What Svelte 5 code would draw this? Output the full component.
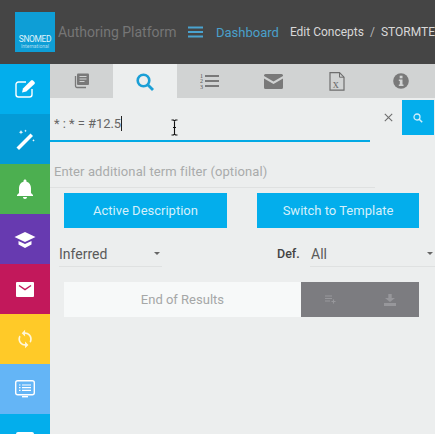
<script>
  const side = [
    { c: 'edit', bg: '#03aeec' },
    { c: 'wand', bg: '#049bd6' },
    { c: 'bell', bg: '#4caf50' },
    { c: 'grad', bg: '#673ab0' },
    { c: 'mail', bg: '#c2185b' },
    { c: 'sync', bg: '#ffca28' },
    { c: 'list', bg: '#64b5f6' },
    { c: 'last', bg: '#03aeec' }
  ];
</script>

<div class="page">
  <header class="top">
    <div class="logo">
      <span class="l1">SNOMED</span>
      <span class="l2">International</span>
    </div>
    <span class="brand">Authoring Platform</span>
    <svg class="burger" width="15" height="12" viewBox="0 0 15 12"><path d="M0 1.500h15M0 6h15M0 10.500h15" stroke="#4aa3d0" stroke-width="1.800"/></svg>
    <span class="dash">Dashboard</span>
    <span class="crumb">Edit Concepts</span>
    <span class="slash">/</span>
    <span class="crumb">STORMTEST</span>
  </header>

  <div class="body">
    <nav class="side">
      {#each side as s}
        <div class="sitem" style="background:{s.bg}">
          <svg width="24" height="24" viewBox="0 0 24 24" fill="none">
            {#if s.c === 'edit'}
              <path d="M13 5H5.500A2.500 2.500 0 0 0 3 7.500v10A2.500 2.500 0 0 0 5.500 20h11a2.500 2.500 0 0 0 2.500-2.500V12" stroke="#fff" stroke-width="1.400"/>
              <path d="M9 15.500l1-4L18 3.500a1.500 1.500 0 0 1 2 0l1.500 1.500a1.500 1.500 0 0 1 0 2L13.300 14.500z" fill="#fff"/>
            {:else if s.c === 'wand'}
              <path d="M3.500 21.500L17.500 7.500l2.500 2.500L6 24z" fill="#fff" transform="translate(0 -1)"/>
              <path d="M8 3l.6 1.600 1.600.6-1.600.6L8 7.400l-.6-1.600-1.600-.6 1.600-.6zM12.500 2.500l.4 1 1 .4-1 .4-.4 1-.4-1-1-.4 1-.4zM20.500 12l.4 1 1 .4-1 .4-.4 1-.4-1-1-.4 1-.4z" fill="#fff"/>
            {:else if s.c === 'bell'}
              <path d="M12 22c1.100 0 2-.9 2-2h-4c0 1.100.89 2 2 2zm6-6v-5c0-3.070-1.640-5.640-4.500-6.320V4c0-.83-.67-1.500-1.500-1.500s-1.500.67-1.500 1.500v.68C7.630 5.360 6 7.920 6 11v5l-2 2v1h16v-1l-2-2z" fill="#fff"/>
            {:else if s.c === 'grad'}
              <path d="M12 5L1.500 10 12 15l10.500-5z" fill="#fff"/>
              <path d="M5.500 14v3.500L12 21l6.500-3.500V14L12 17z" fill="#fff"/>
            {:else if s.c === 'mail'}
              <rect x="3" y="5" width="18" height="15" rx="1" fill="#fff"/>
              <path d="M6 8.500l6 4 6-4" stroke="#c2185b" stroke-width="1.500"/>
            {:else if s.c === 'sync'}
              <g transform="translate(2 2) scale(.84)">
                <path d="M12 4V1L8 5l4 4V6c3.310 0 6 2.690 6 6 0 1.010-.25 1.970-.7 2.800l1.460 1.460C19.540 15.030 20 13.570 20 12c0-4.420-3.580-8-8-8zm0 14c-3.310 0-6-2.690-6-6 0-1.010.25-1.970.7-2.800L5.240 7.740C4.460 8.970 4 10.430 4 12c0 4.420 3.580 8 8 8v3l4-4-4-4v3z" fill="#fff6d8"/>
              </g>
            {:else if s.c === 'list'}
              <rect x="2.700" y="3.700" width="18.600" height="14" rx="2" stroke="#fff" stroke-width="1.400"/>
              <path d="M9 19.700h6" stroke="#fff" stroke-width="1.400"/>
              <path d="M6 8h1.500M9 8h9M6 10.700h1.500M9 10.700h9M6 13.400h1.500M9 13.400h9" stroke="#fff" stroke-width="1.200"/>
            {:else}
              <path d="M3 7a2 2 0 0 1 2-2h14a2 2 0 0 1 2 2v12H3z" fill="#fff"/>
            {/if}
          </svg>
        </div>
      {/each}
    </nav>

    <main class="main">
      <div class="tabs">
        <div class="tab first">
          <svg width="18" height="18" viewBox="0 0 18 18"><path d="M5 1.500h10a1 1 0 0 1 1 1V12a1 1 0 0 1-1 1H5a1 1 0 0 1-1-1V2.500a1 1 0 0 1 1-1z" fill="#797979"/><path d="M6.500 4.500h7M6.500 7h7M6.500 9.500h5" stroke="#d1d3d3" stroke-width="1.200"/><path d="M2.500 4v10a1.500 1.500 0 0 0 1.500 1.500h9" stroke="#797979" stroke-width="1.300" fill="none"/></svg>
        </div>
        <div class="tab active">
          <svg width="20" height="20" viewBox="0 0 20 20" fill="none"><circle cx="8.500" cy="8.500" r="5.800" stroke="#1a9fd6" stroke-width="2.600"/><path d="M13 13l5 5" stroke="#1a9fd6" stroke-width="2.800"/></svg>
        </div>
        <div class="tab">
          <svg width="19" height="18" viewBox="0 0 19 18"><text x="0" y="5.500" class="nums">1</text><text x="0" y="11" class="nums">2</text><text x="0" y="16.500" class="nums">3</text><path d="M5 4h14M5 9h14M5 14h14" stroke="#797979" stroke-width="2"/></svg>
        </div>
        <div class="tab">
          <svg width="19" height="15" viewBox="0 0 19 15"><path d="M1.500 0h16A1.500 1.500 0 0 1 19 1.500v.4L9.500 7.500 0 1.900v-.4A1.500 1.500 0 0 1 1.500 0z" fill="#797979"/><path d="M0 4.400l9.500 5.500L19 4.400v9.100a1.500 1.500 0 0 1-1.500 1.500h-16A1.500 1.500 0 0 1 0 13.500z" fill="#797979"/></svg>
        </div>
        <div class="tab">
          <svg width="16" height="19" viewBox="0 0 16 19" fill="none"><path d="M1 .7h9.500L15 5.200v13H1z" stroke="#6e6e6e" stroke-width="1.200"/><path d="M10.500 .7v4.500H15" stroke="#6e6e6e" stroke-width="1"/><text x="3.700" y="15.500" class="x">x</text></svg>
        </div>
        <div class="tab">
          <svg width="16" height="16" viewBox="0 0 16 16"><circle cx="8" cy="8" r="7.800" fill="#797979"/><rect x="6.700" y="2.700" width="2.800" height="2.600" fill="#d1d3d3"/><path d="M5.800 6.500h3.700v5h1v1.500H5.800v-1.500h1v-3.500h-1z" fill="#d1d3d3"/></svg>
        </div>
      </div>

      <section class="search">
        <div class="query">
          <span class="qtext">* : * = #12.5</span><span class="caret"></span>
        </div>
        <svg class="ibeam" width="9" height="17" viewBox="0 0 9 17" fill="none"><path d="M1.500 1h2l1 1 1-1h2M4.500 2v13M1.500 16h2l1-1 1 1h2M3 8.500h3" stroke="#111" stroke-width="1.100"/></svg>
        <svg class="clear" width="9" height="9" viewBox="0 0 9 9"><path d="M.8.8l7.400 7.400M8.200.8L.8 8.200" stroke="#6e6e6e" stroke-width="1.100"/></svg>
        <div class="sbtn">
          <svg width="10" height="10" viewBox="0 0 10 10" fill="none"><circle cx="4" cy="4" r="3" stroke="#cfeefb" stroke-width="1.300"/><path d="M6.200 6.200L9.200 9.200" stroke="#cfeefb" stroke-width="1.500"/></svg>
        </div>
      </section>

      <div class="filter">Enter additional term filter (optional)</div>

      <div class="btns">
        <div class="btn b1">Active Description</div>
        <div class="btn b2">Switch to Template</div>
      </div>

      <div class="selects">
        <div class="sel s1"><span>Inferred</span><i class="arrow"></i></div>
        <span class="def">Def.</span>
        <div class="sel s2"><span>All</span><i class="arrow"></i></div>
      </div>

      <div class="results">
        <div class="end">End of Results</div>
        <div class="acts">
          <span class="act"><svg width="11" height="9" viewBox="0 0 11 9"><path d="M0 1h7M0 3.500h7M0 6h5M8.500 4.500v4M6.500 6.500h4" stroke="#97979b" stroke-width="1.100"/></svg></span>
          <span class="act"><svg width="12" height="12" viewBox="0 0 12 12"><path d="M4.300 0h3.400v4H11L6 8 1 4h3.300z" fill="#97979b"/><path d="M0 9h12v3H0z" fill="#97979b"/></svg></span>
        </div>
      </div>
    </main>
  </div>
</div>

<style>
  :global(body) { margin: 0; background: #eceeee; overflow: hidden; }
  .page { width: 435px; height: 434px; overflow: hidden; font-family: Roboto, "Liberation Sans", sans-serif; }
  .top { height: 64px; background: #454545; display: flex; align-items: center; white-space: nowrap; overflow: hidden; padding-left: 15px; font-size: 12px; }
  .logo { width: 40px; height: 40px; background: #0e9ed6; color: #dff3fb; display: flex; flex-direction: column; justify-content: flex-end; align-items: center; padding-bottom: 3px; box-sizing: border-box; flex: none; line-height: 1; }
  .l1 { font-size: 8.500px; letter-spacing: -.4px; }
  .l2 { font-size: 5px; margin-top: 1px; color: #aadcf0; }
  .brand { color: #767676; font-size: 14px; margin-left: 3px; width: 130px; flex: none; }
  .burger { flex: none; margin-right: 13px; }
  .dash { color: #4aa0cb; flex: none; font-size: 13px; }
  .crumb { color: #d8d8d8; flex: none; }
  .dash + .crumb { margin-left: 11px; }
  .slash { color: #b5b5b5; margin: 0 6px; flex: none; }
  .body { display: flex; height: 370px; }
  .side { width: 50px; flex: none; }
  .sitem { height: 50px; display: flex; align-items: center; justify-content: center; }
  .main { flex: 1; min-width: 0; }
  .tabs { height: 34px; display: flex; background: #d1d3d3; }
  .tab { width: 64px; height: 34px; display: flex; align-items: center; justify-content: center; }
  .tab.first { width: 63px; }
  .tab.active { background: #eceeee; height: 35px; }
  .nums { font: 6px "Liberation Serif", serif; fill: #555; }
  .x { font: 12px "Liberation Serif", serif; fill: #6e6e6e; }
  .search { height: 43px; margin-top: 1px; display: flex; position: relative; }
  .query { width: 320px; border-bottom: 2px solid #03a9e4; box-sizing: border-box; display: flex; align-items: center; padding: 8px 0 0 4px; font-size: 13px; letter-spacing: -.05px; color: #666; height: 43px; }
  .caret { width: 1px; height: 15px; background: #222; }
  .ibeam { position: absolute; left: 120px; top: 20px; }
  .clear { position: absolute; left: 334px; top: 14px; }
  .sbtn { position: absolute; left: 352px; top: 1px; width: 32px; height: 35px; background: #03aeec; display: flex; align-items: center; justify-content: center; }
  .filter { margin-top: 21px; height: 25px; font-size: 13px; letter-spacing: .1px; color: #a9abab; border-bottom: 1px solid #dfe1e1; width: 325px; padding-left: 4px; box-sizing: border-box; line-height: 17px; }
  .btns { display: flex; margin: 5px 0 0 14px; }
  .btn { height: 35px; background: #03aeec; color: #d5f0fb; font-size: 13px; display: flex; align-items: center; justify-content: center; }
  .b1 { width: 163px; }
  .b2 { width: 162px; margin-left: 30px; }
  .selects { display: flex; align-items: flex-start; margin: 11px 0 0 9px; font-size: 14px; color: #5a5a5a; }
  .sel { height: 28px; padding-top: 2px; border-bottom: 1px solid #dfe1e1; display: flex; justify-content: space-between; align-items: center; box-sizing: border-box; flex: none; }
  .sel i { width: 0; height: 0; border: 3.500px solid transparent; border-top: 3.500px solid #666; border-bottom: 0; }
  .s1 { width: 103px; padding-right: 2px; }
  .s2 { width: 125px; padding-right: 2px; padding-left: 1px; }
  .def { margin-left: 115px; width: 23px; margin-right: 10px; font-size: 12.500px; font-weight: 500; line-height: 30px; color: #444; flex: none; white-space: nowrap; }
  .results { display: flex; height: 35px; margin: 13px 0 0 14px; width: 355px; }
  .end { width: 237px; background: #f7f9f9; color: #a5a7a7; font-size: 13px; display: flex; align-items: center; justify-content: flex-end; padding-right: 77px; box-sizing: border-box; }
  .acts { width: 118px; background: #7c7c80; display: flex; align-items: center; }
  .act { flex: 1; display: flex; justify-content: center; }
</style>
